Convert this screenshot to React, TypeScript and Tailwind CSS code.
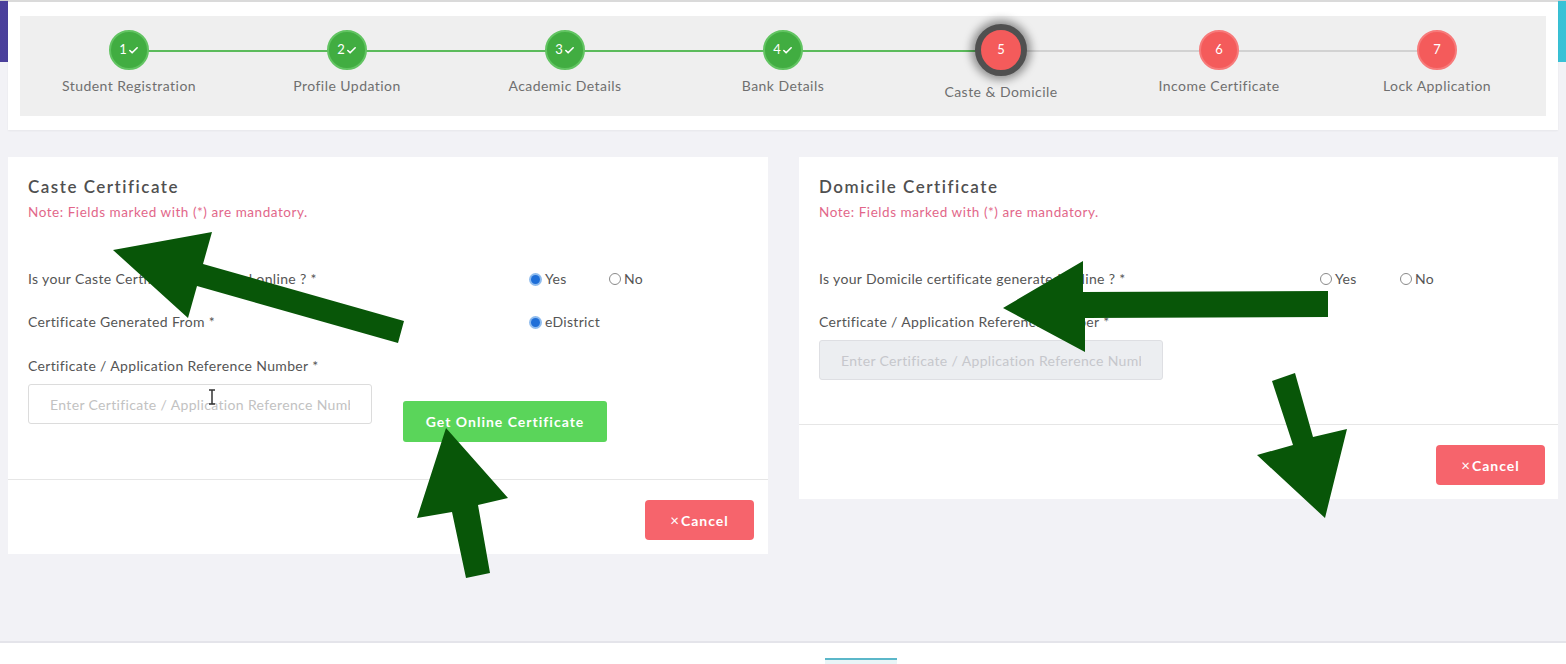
import { Check } from 'lucide-react';

type StepState = 'done' | 'current' | 'todo';

const steps: { n: number; label: string; state: StepState }[] = [
  { n: 1, label: 'Student Registration', state: 'done' },
  { n: 2, label: 'Profile Updation', state: 'done' },
  { n: 3, label: 'Academic Details', state: 'done' },
  { n: 4, label: 'Bank Details', state: 'done' },
  { n: 5, label: 'Caste & Domicile', state: 'current' },
  { n: 6, label: 'Income Certificate', state: 'todo' },
  { n: 7, label: 'Lock Application', state: 'todo' },
];

const Radio = ({ checked, label }: { checked?: boolean; label: string }) => (
  <div className="flex items-center gap-[3px] w-[80px] text-[14px] leading-[20px] tracking-[0.3px] text-[#555]">
    {checked ? (
      <span className="w-[13px] h-[13px] rounded-full bg-[#8fbcee] p-[2px] flex">
        <span className="w-[9px] h-[9px] rounded-full bg-[#1f6fd8]" />
      </span>
    ) : (
      <span className="w-[12px] h-[12px] rounded-full border border-[#8a8a8a] bg-white" />
    )}
    <span>{label}</span>
  </div>
);

const CancelButton = () => (
  <button className="w-[109px] h-[40px] rounded-[4px] bg-[#f6646c] text-white text-[14px] font-bold tracking-[1px] flex items-center justify-center">
    <span className="text-[15px] font-normal mr-[1px]">×</span>Cancel
  </button>
);

const CardHeader = ({ title }: { title: string }) => (
  <>
    <h2 className="text-[17px] leading-[24px] font-semibold tracking-[1.5px] text-[#505050]">{title}</h2>
    <p className="mt-[4px] text-[13.5px] leading-[18px] tracking-[0.55px] text-[#e2678a]">
      Note: Fields marked with (*) are mandatory.
    </p>
  </>
);

function Stepper() {
  return (
    <div className="h-[100px] bg-[#efefef] grid grid-cols-7">
      {steps.map((s, i) => (
        <div key={s.n} className="relative flex flex-col items-center pt-[14px]">
          {i < steps.length - 1 && (
            <div
              className={`absolute top-[34px] left-1/2 w-full h-[2px] ${i < 4 ? 'bg-[#5bbb5b]' : 'bg-[#d2d2d2]'}`}
            />
          )}
          {s.state === 'done' && (
            <div className="relative z-10 w-[40px] h-[40px] rounded-full bg-[#41ad41] border-2 border-[#62c462] flex items-center justify-center text-white text-[13px]">
              {s.n}
              <Check className="w-[11px] h-[11px] ml-[1px]" strokeWidth={3.5} />
            </div>
          )}
          {s.state === 'current' && (
            <div className="relative z-10 -mt-[6px] w-[52px] h-[52px] rounded-full bg-[#f45b5b] border-[6px] border-[#505050] shadow-[0_0_8px_4px_rgba(0,0,0,0.4)] flex items-center justify-center text-white text-[13px]">
              {s.n}
            </div>
          )}
          {s.state === 'todo' && (
            <div className="relative z-10 w-[40px] h-[40px] rounded-full bg-[#f45b5b] border-2 border-[#f77a7a] flex items-center justify-center text-white text-[13px]">
              {s.n}
            </div>
          )}
          <span className="mt-[7px] text-[14px] leading-[18px] tracking-[0.45px] text-[#6f6f6f]">{s.label}</span>
        </div>
      ))}
    </div>
  );
}

const labelCls = 'text-[14px] leading-[20px] tracking-[0.35px] text-[#555]';

function CasteCard() {
  return (
    <div className="w-[760px] h-[397px] bg-white flex flex-col">
      <div className="h-[323px] border-b border-[#e6e6e6] px-5 pt-[18px]">
        <CardHeader title="Caste Certificate" />
        <div className="mt-[48px] flex items-center">
          <span className={`w-[501px] ${labelCls}`}>Is your Caste Certificate generated online ? *</span>
          <Radio checked label="Yes" />
          <Radio label="No" />
        </div>
        <div className="mt-[23px] flex items-center">
          <span className={`w-[501px] ${labelCls}`}>Certificate Generated From *</span>
          <Radio checked label="eDistrict" />
        </div>
        <div className={`mt-[24px] ${labelCls}`}>Certificate / Application Reference Number *</div>
        <div className="mt-[8px] flex items-start gap-[31px]">
          <input
            readOnly
            placeholder="Enter Certificate / Application Reference Number"
            className="w-[344px] h-[40px] border border-[#dcdcdc] rounded-[3px] px-[21px] text-[14px] tracking-[0.35px] placeholder:text-[#c2c2c2] outline-none"
          />
          <button className="mt-[17px] w-[204px] h-[41px] rounded-[3px] bg-[#5ad55a] text-white text-[14px] font-bold tracking-[1px]">
            Get Online Certificate
          </button>
        </div>
      </div>
      <div className="flex justify-end pt-[20px] pr-[14px]">
        <CancelButton />
      </div>
    </div>
  );
}

function DomicileCard() {
  return (
    <div className="w-[759px] h-[342px] bg-white flex flex-col">
      <div className="h-[268px] border-b border-[#e6e6e6] px-5 pt-[18px]">
        <CardHeader title="Domicile Certificate" />
        <div className="mt-[48px] flex items-center">
          <span className={`w-[501px] ${labelCls}`}>Is your Domicile certificate generated online ? *</span>
          <Radio label="Yes" />
          <Radio label="No" />
        </div>
        <div className={`mt-[23px] ${labelCls}`}>Certificate / Application Reference Number *</div>
        <input
          disabled
          placeholder="Enter Certificate / Application Reference Number"
          className="mt-[8px] w-[344px] h-[40px] border border-[#dedfe3] rounded-[3px] bg-[#eceef1] px-[21px] text-[14px] tracking-[0.35px] placeholder:text-[#c6c7cc] outline-none"
        />
      </div>
      <div className="flex justify-end pt-[20px] pr-[13px]">
        <CancelButton />
      </div>
    </div>
  );
}

export default function App() {
  return (
    <div className="relative w-[1566px] h-[664px] overflow-hidden bg-[#f2f2f6] flex flex-col font-['Lato','Liberation_Sans',sans-serif]">
      <div className="shrink-0 h-[62px] bg-gradient-to-r from-[#4a3f9b] via-[#5a7fc0] to-[#38c2d6] border-t border-[#cfcfcf]" />
      <div className="shrink-0 -mt-[62px] mx-2 h-[130px] bg-white border-t-2 border-[#dadada] px-3 pt-[14px] shadow-[0_1px_2px_rgba(0,0,0,0.05)]">
        <Stepper />
      </div>

      <div className="shrink-0 h-[511px] px-2 pt-[27px] flex items-start gap-[31px]">
        <CasteCard />
        <DomicileCard />
      </div>

      <div className="flex-1 min-h-0 overflow-hidden bg-white border-t-2 border-[#e4e4ea] pt-[15px]">
        <div className="ml-[825px] w-[72px] h-[10px] border-t-2 border-[#5bb7c9] bg-[#e9f5f7]" />
      </div>

      {/* callout arrows and pointer drawn over the form */}
      <svg className="absolute inset-0 pointer-events-none" width={1566} height={664} viewBox="0 0 1566 664">
        <g fill="#085608">
          <polygon points="113,250 212,232 203,264 404,321 398,343 197,286 188,318" />
          <polygon points="446,428 508,498 478,505 490,573 466,578 452,512 417,518" />
          <polygon points="1003,308 1083,261 1083,292 1328,291 1328,317 1085,318 1085,352" />
          <polygon points="1272,381 1295,373 1313,437 1347,429 1325,518 1257,455 1293,445" />
        </g>
        <path d="M209 390h6M212 390v14M209 404h6" stroke="#333" strokeWidth={1.5} fill="none" />
      </svg>
    </div>
  );
}
